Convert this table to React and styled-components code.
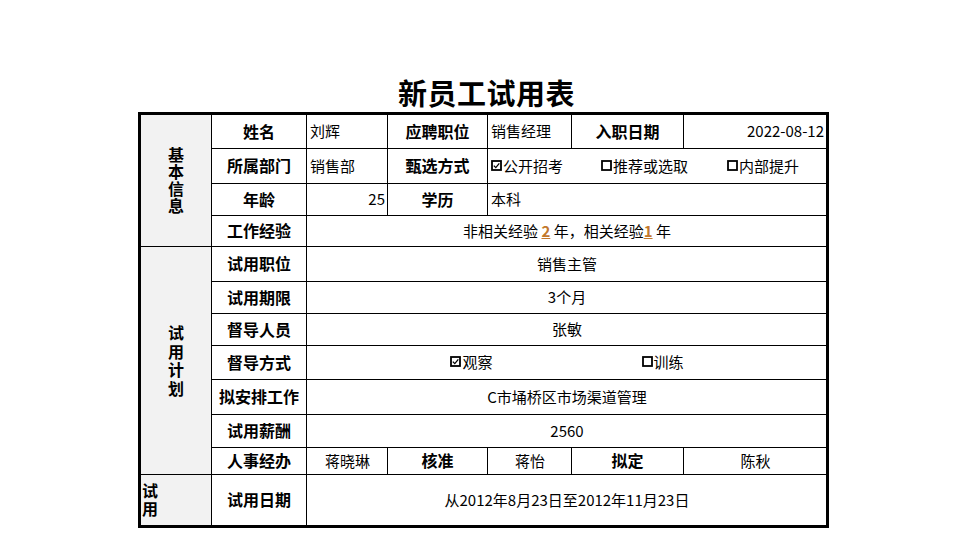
import React from 'react'
import styled, { createGlobalStyle } from 'styled-components'

const GlobalStyle = createGlobalStyle`
  html, body {
    margin: 0;
    padding: 0;
    background: #fff;
  }
  body {
    font-family: "Noto Sans CJK SC", "Liberation Sans", sans-serif;
    color: #000;
  }
`

function CheckBox({ checked }) {
  return (
    <BoxIcon width="11" height="11" viewBox="0 0 11 11">
      <rect x="1" y="1" width="9" height="9" fill="#fff" stroke="#000" strokeWidth="1.8" />
      {checked && <path d="M2.8 5.6 L4.8 7.6 L8.3 3.4" fill="none" stroke="#000" strokeWidth="1.3" />}
    </BoxIcon>
  )
}

function Option({ checked, label, width }) {
  return (
    <OptionItem $width={width}>
      <CheckBox checked={checked} />
      {label}
    </OptionItem>
  )
}

function SectionLabel({ text, rows, spacing, align }) {
  return (
    <Section $rows={rows} $align={align}>
      <VerticalText $spacing={spacing}>{text}</VerticalText>
    </Section>
  )
}

export default function App() {
  return (
    <Page>
      <GlobalStyle />
      <Title>新员工试用表</Title>
      <Sheet>
        <SectionLabel text="基本信息" rows={4} spacing={1} />
        <Label>姓名</Label>
        <Value>刘辉</Value>
        <Label>应聘职位</Label>
        <Value>销售经理</Value>
        <Label>入职日期</Label>
        <Value $align="right">2022-08-12</Value>

        <Label>所属部门</Label>
        <Value>销售部</Value>
        <Label>甄选方式</Label>
        <Value $span={3}>
          <Option checked label="公开招考" width={110} />
          <Option label="推荐或选取" width={126} />
          <Option label="内部提升" />
        </Value>

        <Label>年龄</Label>
        <Value $align="right">25</Value>
        <Label>学历</Label>
        <Value $span={3}>本科</Value>

        <Label>工作经验</Label>
        <Value $span={5} $align="center">
          非相关经验&nbsp;<Num>2</Num>&nbsp;年，相关经验<Num>1</Num>&nbsp;年
        </Value>

        <SectionLabel text="试用计划" rows={7} spacing={2.5} />
        <Label>试用职位</Label>
        <Value $span={5} $align="center">销售主管</Value>

        <Label>试用期限</Label>
        <Value $span={5} $align="center">3个月</Value>

        <Label>督导人员</Label>
        <Value $span={5} $align="center">张敏</Value>

        <Label>督导方式</Label>
        <Value $span={5} $align="center" $gap={149}>
          <Option checked label="观察" />
          <Option label="训练" />
        </Value>

        <Label>拟安排工作</Label>
        <Value $span={5} $align="center">C市埇桥区市场渠道管理</Value>

        <Label>试用薪酬</Label>
        <Value $span={5} $align="center">2560</Value>

        <Label>人事经办</Label>
        <Value $align="center">蒋晓琳</Value>
        <Label>核准</Label>
        <Value $align="center">蒋怡</Value>
        <Label>拟定</Label>
        <Value $align="center">陈秋</Value>

        <SectionLabel text="试用" rows={1} spacing={2} align="left" />
        <Label>试用日期</Label>
        <Value $span={5} $align="center">从2012年8月23日至2012年11月23日</Value>
      </Sheet>
    </Page>
  )
}

const Page = styled.div`
  width: 960px;
  height: 540px;
  padding: 77px 0 0 138px;
  box-sizing: border-box;
  overflow: hidden;
`

const Title = styled.h1`
  width: 691px;
  margin: 0 0 5px 3px;
  text-align: center;
  font-size: 29px;
  line-height: 30px;
  font-weight: 700;
  letter-spacing: 0.5px;
`

const Sheet = styled.div`
  display: grid;
  grid-template-columns: 70px 94px 80px 99px 83px 111px 142px;
  grid-template-rows: 33px 34px 31px 30px 34px 31px 31px 33px 34px 32px 26px 50px;
  gap: 1px;
  width: fit-content;
  background: #000;
  border: 3px solid #000;
`

const Section = styled.div`
  grid-row: span ${p => p.$rows};
  background: #f2f2f2;
  display: flex;
  align-items: center;
  justify-content: ${p => (p.$align === 'left' ? 'flex-start' : 'center')};
  font-weight: 700;
  font-size: 16px;
`

const VerticalText = styled.div`
  writing-mode: vertical-rl;
  text-orientation: upright;
  letter-spacing: ${p => p.$spacing}px;
  line-height: 18px;
  margin-top: ${p => p.$spacing}px;
`

const Label = styled.div`
  background: #fff;
  display: flex;
  align-items: center;
  justify-content: center;
  padding-bottom: 2px;
  font-size: 16px;
  font-weight: 700;
  white-space: nowrap;
`

const Value = styled.div`
  grid-column: span ${p => p.$span || 1};
  background: #fff;
  display: flex;
  align-items: center;
  gap: ${p => (p.$gap ? `${p.$gap}px` : '0')};
  justify-content: ${p =>
    p.$align === 'right' ? 'flex-end' : p.$align === 'center' ? 'center' : 'flex-start'};
  padding: 0 2px 2px 3px;
  font-size: 15px;
  font-weight: 400;
  white-space: nowrap;
`

const Num = styled.span`
  color: #c2782c;
  text-decoration: underline;
  font-weight: 700;
`

const OptionItem = styled.span`
  display: inline-flex;
  align-items: center;
  width: ${p => (p.$width ? `${p.$width}px` : 'auto')};
`

const BoxIcon = styled.svg`
  display: block;
  margin-right: 1px;
  flex-shrink: 0;
`
